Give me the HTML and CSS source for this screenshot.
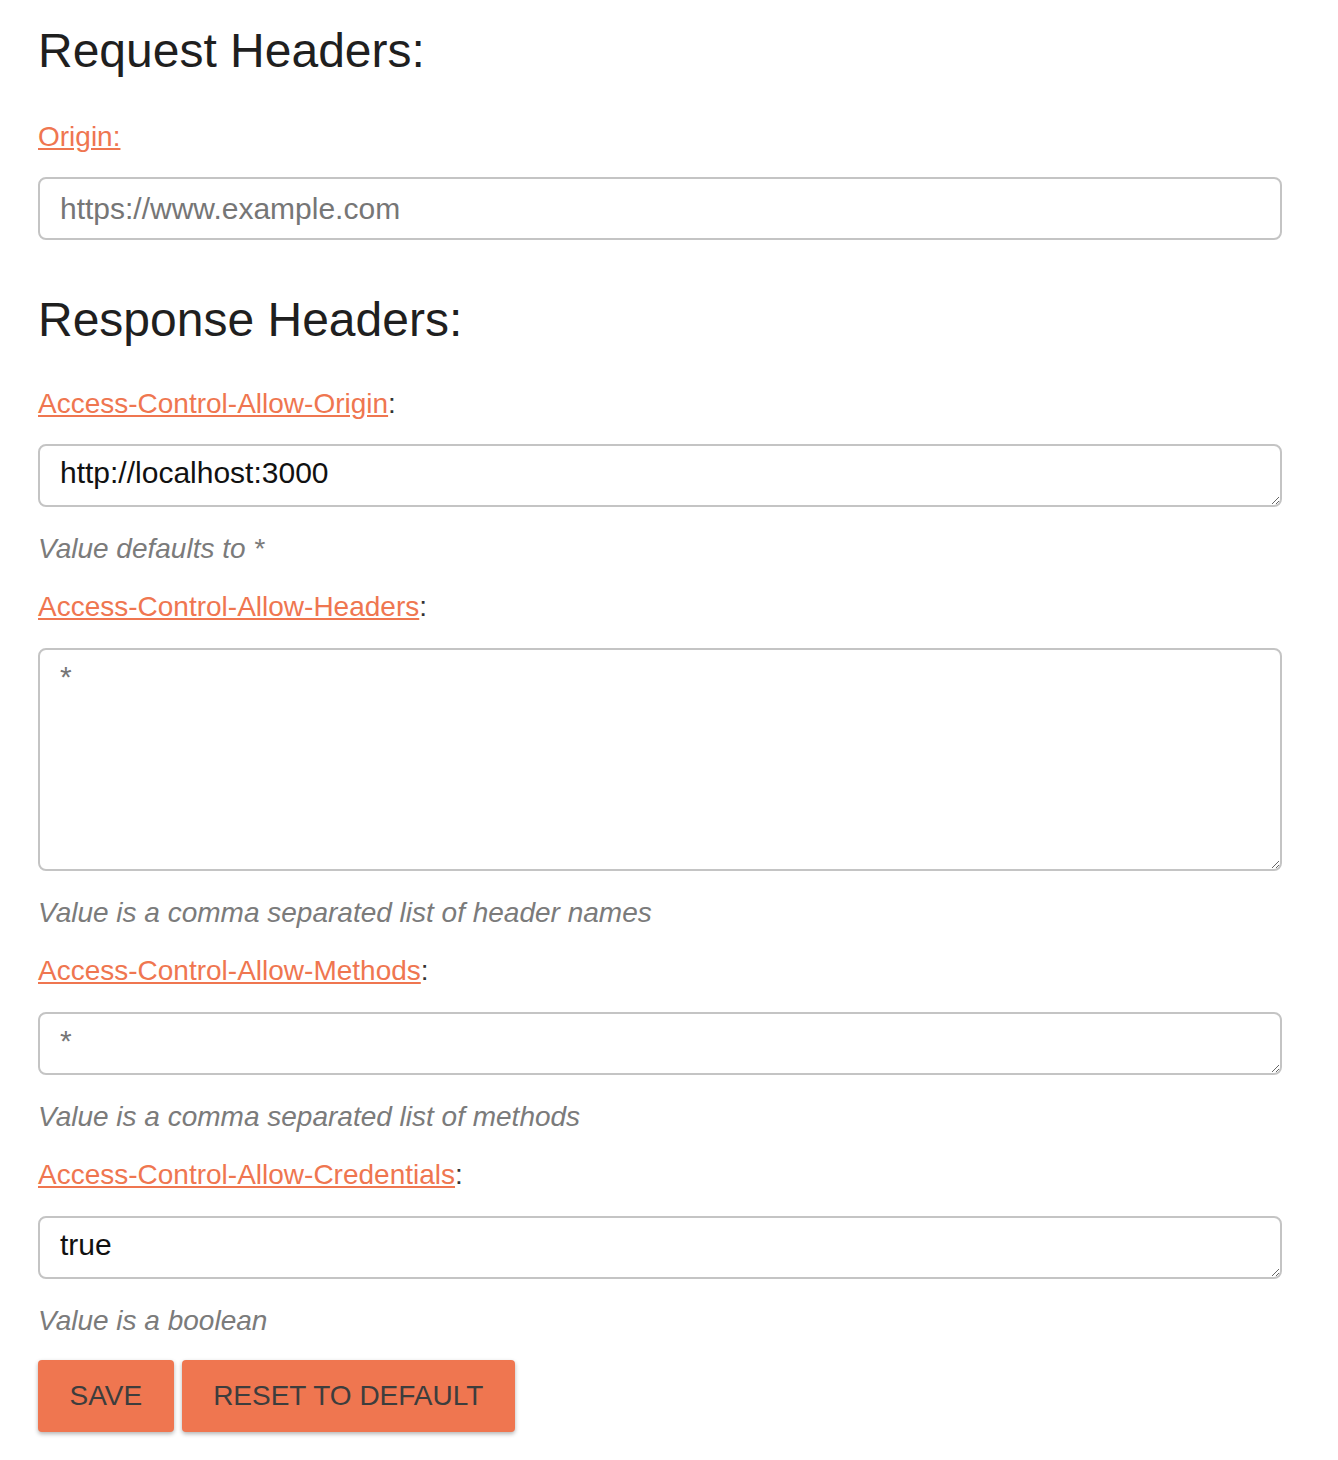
FILE: index.html
```html
<!DOCTYPE html>
<html lang="en">
<head>
<meta charset="utf-8">
<title>CORS Headers</title>
<link rel="stylesheet" href="styles.css">
</head>
<body>
<main class="page">
  <h1 class="section-title">Request Headers:</h1>
  <div class="field">
    <label class="field-label" for="origin"><a class="doc-link" href="#">Origin:</a></label>
    <input class="text-input" id="origin" type="text" placeholder="https://www.example.com">
  </div>

  <h1 class="section-title section-title--second">Response Headers:</h1>
  <div class="field">
    <label class="field-label" for="acao"><a class="doc-link" href="#">Access-Control-Allow-Origin</a>:</label>
    <textarea class="text-area" id="acao" rows="1">http://localhost:3000</textarea>
    <p class="hint">Value defaults to *</p>
  </div>
  <div class="field">
    <label class="field-label" for="acah"><a class="doc-link" href="#">Access-Control-Allow-Headers</a>:</label>
    <textarea class="text-area text-area--tall" id="acah" placeholder="*"></textarea>
    <p class="hint">Value is a comma separated list of header names</p>
  </div>
  <div class="field">
    <label class="field-label" for="acam"><a class="doc-link" href="#">Access-Control-Allow-Methods</a>:</label>
    <textarea class="text-area" id="acam" rows="1" placeholder="*"></textarea>
    <p class="hint">Value is a comma separated list of methods</p>
  </div>
  <div class="field">
    <label class="field-label" for="acac"><a class="doc-link" href="#">Access-Control-Allow-Credentials</a>:</label>
    <textarea class="text-area" id="acac" rows="1">true</textarea>
    <p class="hint">Value is a boolean</p>
  </div>

  <div class="actions">
    <button class="btn" type="button">Save</button>
    <button class="btn" type="button">Reset to default</button>
  </div>
</main>
</body>
</html>
```

FILE: styles.css
```css
html, body {
  margin: 0;
  padding: 0;
  background: #ffffff;
}

body {
  font-family: "Liberation Sans", Arial, Helvetica, sans-serif;
  color: #222222;
}

.page {
  padding: 23px 56px 40px 38px;
  display: flex;
  flex-direction: column;
}

.section-title {
  margin: 0 0 42px 0;
  font-size: 48px;
  line-height: 56px;
  font-weight: normal;
  color: #1f1f1f;
}

.section-title--second {
  margin-top: 52px;
  margin-bottom: 40px;
}

.field {
  display: flex;
  flex-direction: column;
}

.field + .field {
  margin-top: 27px;
}

.field-label {
  display: block;
  font-size: 28px;
  line-height: 32px;
  color: #333333;
  margin-bottom: 24px;
}

.field + .field .field-label {
  margin-bottom: 25px;
}

.doc-link {
  color: #ef7650;
  text-decoration: underline;
}

.text-input,
.text-area {
  box-sizing: border-box;
  width: 100%;
  margin: 0;
  border: 2px solid #c4c4c4;
  border-radius: 8px;
  font-family: "Liberation Sans", Arial, Helvetica, sans-serif;
  font-size: 30px;
  color: #111111;
  background: #ffffff;
  outline: none;
}

.text-input {
  height: 63px;
  padding: 0 20px;
  line-height: 34px;
}

.text-area {
  display: block;
  height: 63px;
  padding: 10px 20px 0 20px;
  line-height: 34px;
  resize: vertical;
  overflow: hidden;
}

.text-area--tall {
  height: 223px;
}

.text-input::placeholder,
.text-area::placeholder {
  color: #767676;
  opacity: 1;
}

.hint {
  margin: 26px 0 0 0;
  font-size: 28px;
  line-height: 32px;
  font-style: italic;
  color: #7b7b7b;
}

.field + .field {
  margin-top: 26px;
}

.actions {
  display: flex;
  gap: 8px;
  margin-top: 23px;
}

.btn {
  height: 72px;
  padding: 0 31.5px;
  border: none;
  border-radius: 4px;
  background: #ef7650;
  color: #3d3d3d;
  font-family: "Liberation Sans", Arial, Helvetica, sans-serif;
  font-size: 28px;
  text-transform: uppercase;
  box-shadow: 0 2px 4px rgba(0, 0, 0, 0.3);
  cursor: pointer;
}
```
